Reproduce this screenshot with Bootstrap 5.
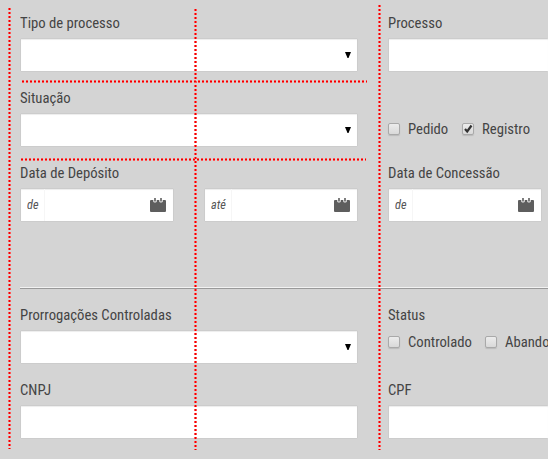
<!DOCTYPE html>
<html lang="pt-BR">
<head>
<meta charset="utf-8">
<meta name="viewport" content="width=device-width, initial-scale=1">
<title>Processos</title>
<link href="https://cdn.jsdelivr.net/npm/bootstrap@5.3.0/dist/css/bootstrap.min.css" rel="stylesheet">
<style>
body{background:#d4d4d4;color:#444;font:15.5px/20px "Roboto Condensed",Roboto,sans-serif;width:548px;height:459px;overflow:hidden}
.page{padding:13px 0 0 20px;width:548px;height:459px;overflow:hidden}
.fields{display:grid;grid-template-columns:338px 160px;column-gap:30px;grid-auto-rows:75px}
.tag{display:block;height:20px;margin-bottom:5px;white-space:nowrap}
.cond{display:inline-block;transform:scaleX(.947);transform-origin:0 50%;white-space:nowrap}
.box{height:34px;background:#fff;border:1px solid #ccc;box-shadow:inset 0 1px 1px rgba(0,0,0,.075);border-radius:1px}
.open-end{border-right:0}
.half{width:154px}
.half .pre{width:24px;padding-left:6px;font-size:13px;font-style:italic;color:#555;border-right:1px solid #f6f6f6;align-self:stretch;line-height:31px}
.half .pre.wide{width:27px}
.arrow{margin-right:6px}
.cal{margin-right:7px;margin-top:-1px}
.tick{width:12px;height:12px;flex:none;border:1px solid #a9a9a9;border-radius:2px;background:linear-gradient(#ececec,#d9d9d9);box-shadow:0 1px 1px rgba(0,0,0,.12)}
.tick svg{display:block;overflow:visible}
.opt{height:20px;flex:none}
.opt .cond{margin-left:8px}
.opt.o1{width:74px}.opt.o2{width:97px}
.choices{padding-top:31px}
.choices-near{padding-top:7px}
.rule{height:2px;background:#999;border-top:1px solid #f2f2f2;margin:49px 0 16px}
.guide{position:absolute;z-index:2}
.gv{width:3px;background:repeating-linear-gradient(#f55 0 2px,transparent 2px 4px)}
.gv::after{content:"";display:block;width:1px;height:100%;margin-left:1px;background:repeating-linear-gradient(#e00 0 2px,transparent 2px 4px)}
.gh{height:3px;background:repeating-linear-gradient(90deg,#f55 0 2px,transparent 2px 4px)}
.gh::after{content:"";display:block;height:1px;position:relative;top:1px;background:repeating-linear-gradient(90deg,#e00 0 2px,transparent 2px 4px)}
.g1{left:8px;top:8px;height:441px}.g2{left:194px;top:9px;height:441px}.g3{left:378px;top:5px;height:445px}
.g4{left:22px;top:80px;width:345px}.g5{left:21px;top:158px;width:345px}
</style>
<script src="https://cdn.jsdelivr.net/npm/bootstrap@5.3.0/dist/js/bootstrap.bundle.min.js"></script>
</head>
<body class="position-relative">
<svg width="0" height="0" class="position-absolute"><defs>
<symbol id="cal" viewBox="0 0 16 14"><path fill="#5e5e5e" d="M0 3Q0 2 1 2H3.300V3.500Q3.300 4.500 5 4.500T6.700 3.500V2H9.300V3.500Q9.300 4.500 11 4.500T12.700 3.500V2H15Q16 2 16 3V13Q16 14 15 14H1Q0 14 0 13Z"/><path fill="#5e5e5e" d="M4.200 0h1.600v3.500H4.200zM10.200 0h1.600v3.500H10.200z"/></symbol>
<symbol id="arr" viewBox="0 0 6 6"><path d="M0 0H6L3.500 6H2.500Z"/></symbol>
</defs></svg>
<main class="page">
 <div class="fields">
  <div><label class="tag"><span class="cond">Tipo de processo</span></label><div class="box d-flex align-items-center justify-content-end"><svg class="arrow" width="6" height="6"><use href="#arr"/></svg></div></div>
  <div><label class="tag"><span class="cond">Processo</span></label><div class="box open-end"></div></div>
  <div><label class="tag"><span class="cond">Situação</span></label><div class="box d-flex align-items-center justify-content-end"><svg class="arrow" width="6" height="6"><use href="#arr"/></svg></div></div>
  <div class="d-flex choices"><div class="d-flex align-items-center opt o1"><span class="tick"></span><span class="cond">Pedido</span></div><div class="d-flex align-items-center opt"><span class="tick"><svg width="10" height="10" viewBox="0 0 10 10"><path d="M2 5 4.200 7.500 8.500 1.500" fill="none" stroke="#333" stroke-width="2.200"/></svg></span><span class="cond">Registro</span></div></div>
  <div><label class="tag"><span class="cond">Data de Depósito</span></label><div class="d-flex justify-content-between">
   <div class="box half d-flex align-items-center"><span class="pre"><span class="cond">de</span></span><svg class="cal ms-auto" width="16" height="14"><use href="#cal"/></svg></div>
   <div class="box half d-flex align-items-center"><span class="pre wide"><span class="cond">até</span></span><svg class="cal ms-auto" width="16" height="14"><use href="#cal"/></svg></div></div></div>
  <div><label class="tag"><span class="cond">Data de Concessão</span></label><div class="box half d-flex align-items-center"><span class="pre"><span class="cond">de</span></span><svg class="cal ms-auto" width="16" height="14"><use href="#cal"/></svg></div></div>
 </div>
 <div class="rule"></div>
 <div class="fields">
  <div><label class="tag"><span class="cond">Prorrogações Controladas</span></label><div class="box d-flex align-items-center justify-content-end"><svg class="arrow" width="6" height="6"><use href="#arr"/></svg></div></div>
  <div><label class="tag mb-0"><span class="cond">Status</span></label><div class="d-flex choices-near"><div class="d-flex align-items-center opt o2"><span class="tick"></span><span class="cond">Controlado</span></div><div class="d-flex align-items-center opt"><span class="tick"></span><span class="cond">Abando</span></div></div></div>
  <div><label class="tag"><span class="cond">CNPJ</span></label><div class="box"></div></div>
  <div><label class="tag"><span class="cond">CPF</span></label><div class="box open-end"></div></div>
 </div>
</main>
<div class="guide gv g1"></div><div class="guide gv g2"></div><div class="guide gv g3"></div>
<div class="guide gh g4"></div><div class="guide gh g5"></div>
</body>
</html>
